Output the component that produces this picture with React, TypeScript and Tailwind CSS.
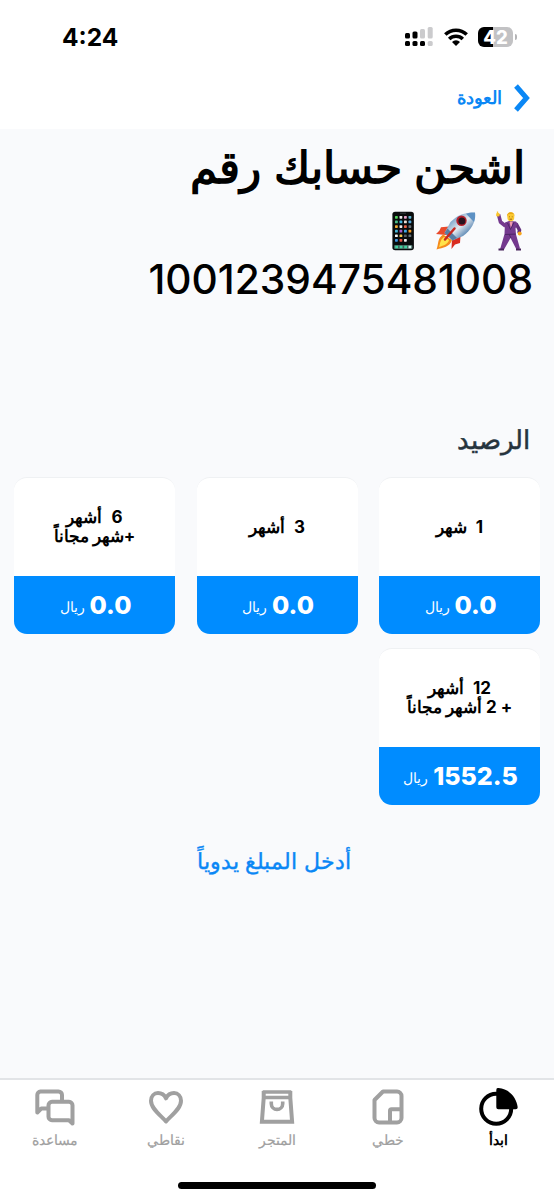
import type { ReactNode } from "react";
import clsx from "clsx";

const PLANS: { count: string; unit: string; bonus?: string; price: string }[] = [
  { count: "1", unit: "شهر", price: "0.0" },
  { count: "3", unit: "أشهر", price: "0.0" },
  { count: "6", unit: "أشهر", bonus: "+شهر مجاناً", price: "0.0" },
  { count: "12", unit: "أشهر", bonus: "+ 2 أشهر مجاناً", price: "1552.5" },
];

const TABS: { label: string; icon: () => ReactNode; active?: boolean }[] = [
  { label: "ابدأ", icon: UsageIcon, active: true },
  { label: "خطي", icon: SimIcon },
  { label: "المتجر", icon: ShopIcon },
  { label: "نقاطي", icon: HeartIcon },
  { label: "مساعدة", icon: ChatIcon },
];

function UsageIcon() {
  return (
    <svg width="40" height="40" viewBox="0 0 40 40" fill="none">
      <circle cx="17.2" cy="20.8" r="15" stroke="currentColor" strokeWidth="4" />
      <path d="M17.300 2a2 2 0 0 1 2.200-2C29.500 .7 37.500 8.700 38.700 19.300a2 2 0 0 1-2 2H19.300a2 2 0 0 1-2-2z" fill="currentColor" />
    </svg>
  );
}

function SimIcon() {
  return (
    <svg width="40" height="40" viewBox="0 0 40 40" fill="none" stroke="currentColor" strokeWidth="4">
      <path d="M15 3.500H29a4.500 4.500 0 0 1 4.500 4.500V30a4.500 4.500 0 0 1-4.500 4.500H11A4.500 4.500 0 0 1 6.500 30V12z" strokeLinejoin="round" />
      <path d="M33 21.200h-9.500a1.500 1.500 0 0 0-1.500 1.500V34" />
    </svg>
  );
}

function ShopIcon() {
  return (
    <svg width="40" height="40" viewBox="0 0 40 40" fill="none" stroke="currentColor" strokeWidth="4">
      <path d="M5.700 4h28.600M5.500 9.500h29" strokeWidth="3.600" />
      <path d="M6.700 3v7L4.900 33.700h30.200L33.300 10V3" />
      <path d="M14.300 13.500v2.200a5.700 5.700 0 0 0 11.400 0v-2.200" strokeWidth="3.600" />
    </svg>
  );
}

function HeartIcon() {
  return (
    <svg width="40" height="40" viewBox="0 0 40 40" fill="none" stroke="currentColor" strokeWidth="4">
      <path
        d="M20 33.500C15 27.500 5 21 5 12.800c0-4.500 3-7.700 7-7.700 3.700 0 6.500 2.200 8 5.200 1.500-3 4.300-5.200 8-5.200 4 0 7 3.200 7 7.700 0 8.200-10 14.700-15 20.700z"
        strokeLinejoin="round"
      />
    </svg>
  );
}

function ChatIcon() {
  return (
    <svg width="40" height="40" viewBox="0 0 40 40" fill="none" stroke="currentColor" strokeWidth="4" strokeLinejoin="round">
      <path d="M27 13V7a3.500 3.500 0 0 0-3.500-3.500h-18A3.500 3.500 0 0 0 2.300 7v17.500l4-4H13" />
      <path d="M17 13.800h17a3.500 3.500 0 0 1 3.500 3.500V35.500l-3.500-3.300H17a3.500 3.500 0 0 1-3.500-3.500V17.300a3.500 3.500 0 0 1 3.500-3.500z" />
    </svg>
  );
}

function StatusBar() {
  return (
    <div dir="ltr" className="flex h-[67px] items-center justify-between pt-[7px] pr-[37px] pl-[62px]">
      <span className="text-[24.500px] leading-none font-bold">4:24</span>
      <div className="flex items-center gap-[10.500px]">
        <svg width="28" height="20" viewBox="0 0 28 20">
          <rect x="0" y="6" width="5" height="5.500" rx="1.500" />
          <rect x="7.500" y="4.500" width="5" height="7" rx="1.500" />
          <g fill="#cbcbcd">
            <rect x="15" y="2" width="5" height="9.500" rx="1.500" />
            <rect x="22.700" y="0" width="5" height="11.500" rx="1.500" />
            <rect x="22.700" y="14" width="5" height="5" rx="1.500" />
          </g>
          <rect x="0" y="14" width="5" height="5" rx="1.500" />
          <rect x="7.500" y="14" width="5" height="5" rx="1.500" />
          <rect x="15" y="14" width="5" height="5" rx="1.500" />
        </svg>
        <svg width="24" height="18" viewBox="0 0 24 18" fill="none" stroke="#000" strokeWidth="3.500">
          <path d="M1.300 6.600a15.300 15.300 0 0 1 21.400 0" />
          <path d="M5.200 11a9.700 9.700 0 0 1 13.600 0" />
          <path d="M12 18 8 13.900a5.600 5.600 0 0 1 8 0z" fill="#000" stroke="none" />
        </svg>
        <div className="flex items-center gap-[2px]">
          <div className="flex h-[20px] w-[35px] items-center justify-center rounded-[6px] bg-linear-to-r from-black from-43% to-[#c2c2c4] to-43% text-[18.500px] leading-none font-extrabold text-white">
            42
          </div>
          <span className="h-[6px] w-[2px] rounded-r-full bg-[#b4b4b6]" />
        </div>
      </div>
    </div>
  );
}

function Dancer() {
  return (
    <svg width="27" height="40" viewBox="0 0 27 40">
      <path d="M9.500 15 4.500 11 2.500 3.500" fill="none" stroke="#74398e" strokeWidth="3.600" strokeLinejoin="round" />
      <path d="M20 12.500l3.500 6.500-.5 3" fill="none" stroke="#64307e" strokeWidth="3.600" strokeLinejoin="round" />
      <path d="M9 11.500l4-1.500 7 .5 1.500 2-2 5 .5 6 4 14-3.500 1-6-11.500L8 38.500H4L8.500 23z" fill="#74398e" />
      <path d="M13.500 11l1.500 6.500 1.800-6.700z" fill="#ef9bb0" />
      <path d="M11.500 12l3 6.500 3.500-7" fill="none" stroke="#4e2466" strokeWidth=".9" />
      <path d="M9 23.500l10.500-.4M15 27l-2-4" stroke="#4e2466" strokeWidth="1" />
      <circle cx="1.900" cy="3.700" r="1.900" fill="#fbc52c" />
      <path d="M1.500 3V.5" stroke="#fbc52c" strokeWidth="1.300" />
      <circle cx="23.700" cy="22.500" r="2" fill="#f8a51b" />
      <ellipse cx="14.800" cy="5.800" rx="3.500" ry="4.600" fill="#fbc92f" />
      <path d="M11 5.500C10.500 0 18.500-.5 18.900 5.500L17.500 3h-5z" fill="#e8a714" />
      <path d="M13.200 5.800h.8M15.800 5.800h.8M13.500 8.200h2.600" stroke="#7b4b15" strokeWidth=".8" />
      <path d="M2.500 38.600h5.500M20 38.600h5" stroke="#4a245c" strokeWidth="2" />
    </svg>
  );
}

function RocketEmoji() {
  return (
    <svg width="41" height="38" viewBox="0 0 41 38">
      <defs>
        <linearGradient id="hull" x1="0" y1="0" x2="1" y2="1">
          <stop offset="0.200" stopColor="#6697c5" />
          <stop offset="0.500" stopColor="#e4e9ef" />
          <stop offset="0.750" stopColor="#5986b3" />
          <stop offset="1" stopColor="#526579" />
        </linearGradient>
      </defs>
      <path d="M14 14.500 6 15.300 4.500 18.500 1 22l12 1.200z" fill="#e94a2b" />
      <path d="M25.500 23.500 25 31l-5 1.500-3.500 4.500.5-11z" fill="#d92c20" />
      <path d="M8 22.500C2 27 4 31 1.500 37.500 8 35.500 15 35 17 28z" fill="#f58b1d" />
      <path d="M9 25C5 28 5.500 31 4 35c5-1.500 9-3 10-7z" fill="#ffe34a" />
      <path d="M40 .5c1 10-4 17.500-12 23.500L17.500 28.500 9.500 21 15.500 10C22 3.500 29 0 40 .5z" fill="url(#hull)" />
      <path d="M40 .5c.5 4 0 6.500-1 9.500L31 1.800C34 .6 37 .3 40 .5z" fill="#5d91c4" />
      <path d="M12.500 16.500 22 26l-4.500 2.500L9.500 21z" fill="#577da4" />
      <path d="M19.500 16.500 10 27.500" stroke="#c82821" strokeWidth="2.500" strokeLinecap="round" />
      <circle cx="26.500" cy="8.800" r="5.200" fill="#b7202d" />
      <circle cx="26.900" cy="8.900" r="3.500" fill="#29131e" />
    </svg>
  );
}

function PhoneEmoji() {
  const colors = [
    "#52d45c", "#ececec", "#e9a2ca", "#62b5d0",
    "#4bbd86", "#43b7df", "#eadfd6", "#55a9da",
    "#f3ad33", "#ededed", "#e96245", "#697078",
    "#49b8d8", "#a45ac9", "#3ea8e7", "#f39c25",
    "#f5f5f5", "#f4c951", "#535961", "#66717b",
    "#4097e4", "#e95043", "#f3f3f3",
  ];
  return (
    <svg width="23" height="40" viewBox="0 0 23 40">
      <rect x=".4" y=".8" width="21.500" height="38.500" rx="2.800" fill="#090b0c" />
      <path d="M8 2.200h6" stroke="#343a3d" />
      {colors.map((c, i) => (
        <rect key={i} x={3 + (i % 4) * 4.500} y={5 + Math.floor(i / 4) * 4.600} width="2.800" height="2.700" rx=".6" fill={c} />
      ))}
      <rect x="2" y="34" width="18.500" height="4" rx="1" fill="#42645c" />
      <path d="M3.200 36H6m1.700 0h2.800m1.700 0H15" stroke="#43d09f" strokeWidth="2.600" />
      <path d="M16.500 36h2.800" stroke="#d9f4f3" strokeWidth="2.600" />
    </svg>
  );
}

function PlanCard({ count, unit, bonus, price }: (typeof PLANS)[number]) {
  return (
    <div className="h-[157px] overflow-hidden rounded-[13px] border-t border-[#eff1f3] bg-white">
      <div className="flex h-[98px] flex-col items-center justify-center text-[17px] leading-[19px] font-bold">
        <p className="flex items-center gap-[9px]">
          <span>{count}</span>
          <span>{unit}</span>
        </p>
        {bonus && <p className="tracking-[0.2px]">{bonus}</p>}
      </div>
      <div className="flex h-[58px] items-center justify-center gap-[5px] bg-[#008cff] pl-[2px] text-white">
        <span className="text-[25px] leading-none font-extrabold">{price}</span>
        <span className="pt-[6px] text-[13.500px] leading-none">ريال</span>
      </div>
    </div>
  );
}

export default function App() {
  return (
    <div
      dir="rtl"
      className="flex h-[1200px] w-[554px] flex-col overflow-hidden bg-[#f9fafc] font-[Inter,'Liberation_Sans',sans-serif] whitespace-nowrap text-black"
    >
      <header className="h-[129px] shrink-0 bg-white">
        <StatusBar />
        <div className="flex h-[62px] items-center gap-[11px] pr-[23px] text-[#0a87f5]">
          <svg width="18" height="30" viewBox="0 0 18 30" fill="none" stroke="currentColor" strokeWidth="5">
            <path d="m3 3 10.500 12L3 27" />
          </svg>
          <span className="text-[17.500px] leading-none font-bold">العودة</span>
        </div>
      </header>

      <main className="flex-1">
        <h1 className="h-[82px] pt-[9px] pr-[29px] text-[44px] leading-[58px] font-bold [word-spacing:2px]">
          اشحن حسابك رقم
        </h1>
        <div className="flex h-[40px] items-center gap-[20px] pr-[31px]">
          <Dancer />
          <RocketEmoji />
          <PhoneEmoji />
        </div>
        <p className="h-[157px] pt-px pr-[21px] text-[40.700px] leading-[56px] font-medium">1001239475481008</p>
        <h2 className="h-[69px] pt-[12px] pr-[24px] text-[25.500px] leading-[40px] text-[#26343e] [-webkit-text-stroke:0.5px]">الرصيد</h2>
        <div className="grid grid-cols-[161px_161px_161px] justify-between gap-y-[14px] px-[14px]">
          {PLANS.map((plan) => (
            <PlanCard key={plan.count} {...plan} />
          ))}
        </div>
        <p className="pt-[38px] pl-[1px] pr-[7px] text-center text-[22.200px] leading-[36px] text-[#0a87f5] [-webkit-text-stroke:0.4px]">أدخل المبلغ يدوياً</p>
      </main>

      <nav className="h-[122px] shrink-0 border-t-2 border-[#e2e4e7] bg-white">
        <div className="grid h-[102px] grid-cols-5">
          {TABS.map(({ label, icon: Icon, active }) => (
            <div
              key={label}
              className={clsx("flex flex-col items-center pt-[8px]", active ? "font-bold text-black" : "text-[#a0a0a0]")}
            >
              <Icon />
              <span
                className={clsx("mt-[1px] text-[13.500px] leading-[22px]", !active && "[-webkit-text-stroke:0.2px]")}
              >
                {label}
              </span>
            </div>
          ))}
        </div>
        <div className="mx-auto h-[7px] w-[198px] rounded-full bg-black" />
      </nav>
    </div>
  );
}
